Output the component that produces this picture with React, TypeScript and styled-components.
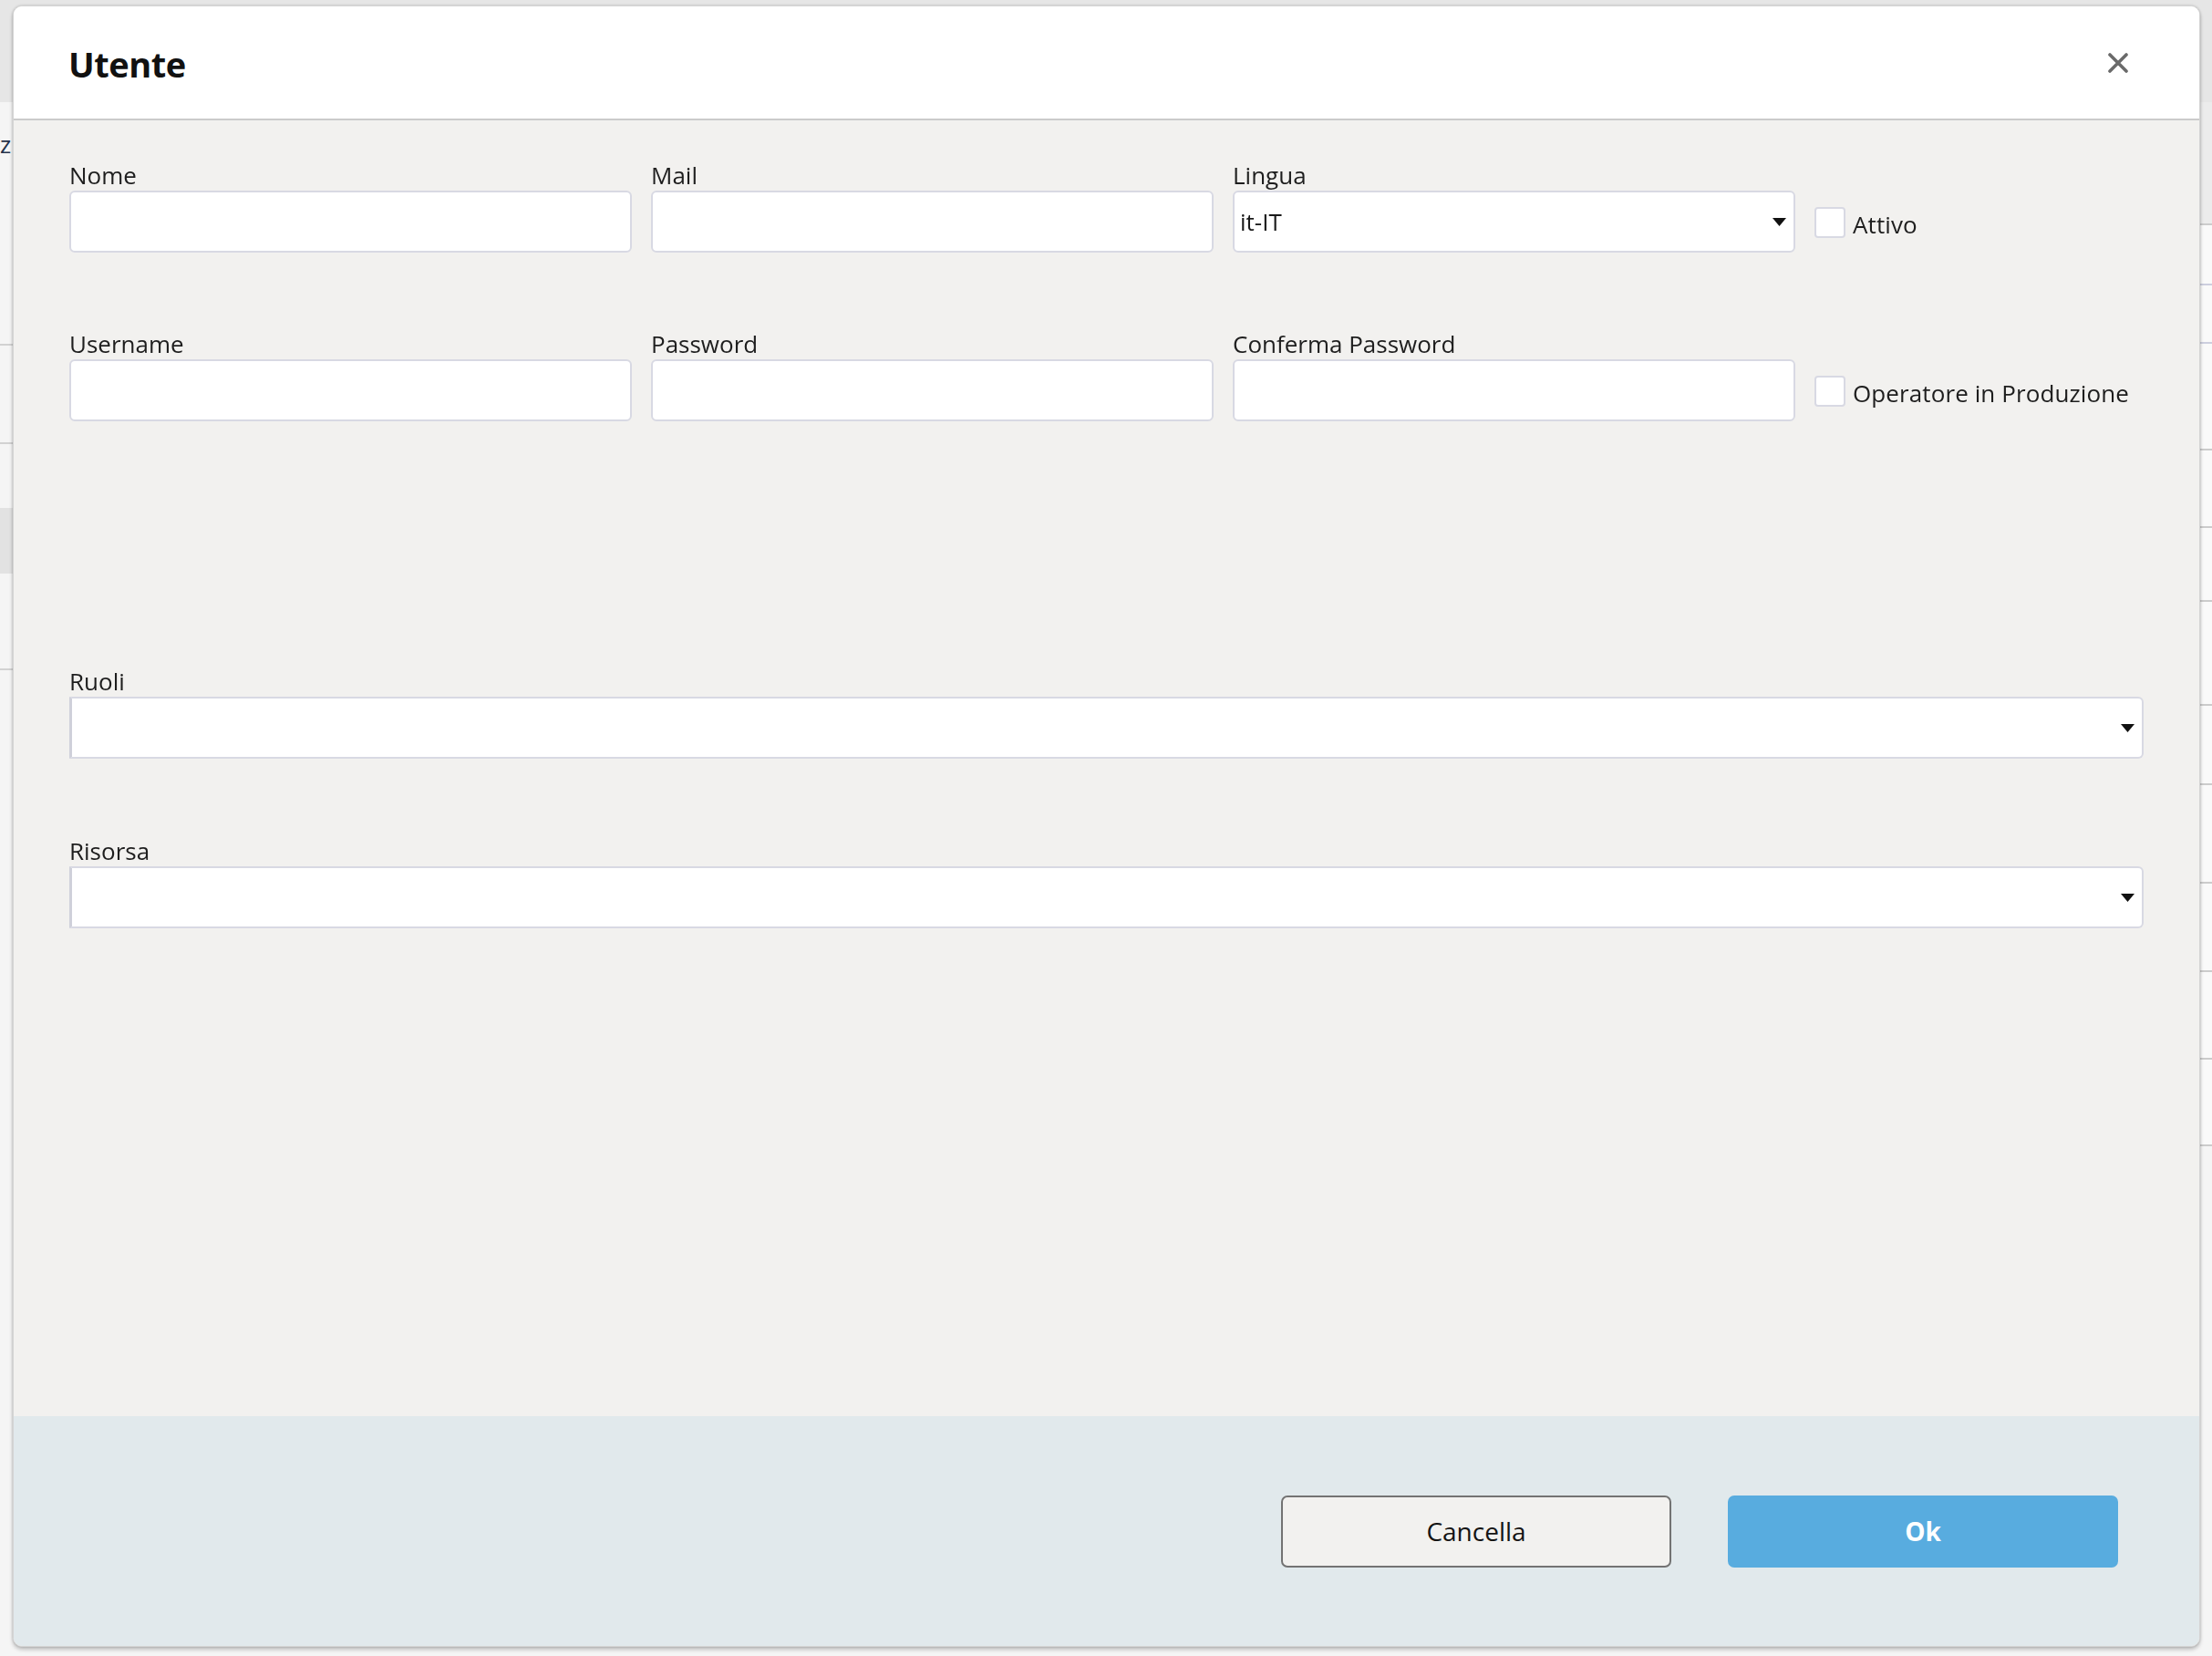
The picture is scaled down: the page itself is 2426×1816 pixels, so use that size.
import React from 'react';
import styled, { createGlobalStyle } from 'styled-components';

const GlobalStyle = createGlobalStyle`
  html, body {
    margin: 0;
    padding: 0;
    width: 100%;
    height: 100%;
    overflow: hidden;
  }
  body {
    font-family: "Open Sans", "Noto Sans", Arial, sans-serif;
    color: #1b1b1b;
    background: #f4f4f4;
  }
  * {
    box-sizing: border-box;
  }
`;

// page behind the modal, only its edges show
const Backdrop = styled.div`
  width: 2426px;
  height: 1816px;
  display: flex;
  flex-direction: column;
  background: #f5f5f5;
`;

const TopBand = styled.div`
  height: 112px;
  flex-shrink: 0;
  background: #e6e6e6;
`;

const BackBody = styled.div`
  flex: 1;
  display: flex;
  justify-content: space-between;
`;

const Rail = styled.div`
  width: 60px;
  display: flex;
  flex-direction: column;
`;

const RailRow = styled.div<{ $h: number; $shade?: boolean; $line?: boolean }>`
  height: ${(p) => p.$h}px;
  flex-shrink: 0;
  background: ${(p) => (p.$shade ? '#e2e2e2' : '#f5f5f5')};
  border-bottom: ${(p) => (p.$line ? '2px solid #d2d2d2' : 'none')};
  font-size: 26px;
  line-height: 1;
  color: #26324a;
  padding: 33px 0 0 0;
  text-align: left;
`;

const Table = styled.div`
  width: 80px;
  display: flex;
  flex-direction: column;
`;

const TableRow = styled.div<{ $h: number; $head?: boolean; $blue?: boolean }>`
  height: ${(p) => p.$h}px;
  flex-shrink: 0;
  background: ${(p) => (p.$head ? '#ececec' : '#fafafa')};
  border-bottom: 2px solid ${(p) => (p.$blue ? '#cdcfdf' : '#cccccc')};
`;

const Overlay = styled.div`
  position: fixed;
  inset: 0;
  padding: 6px 13px 10px 14px;
  display: flex;
`;

const Dialog = styled.div`
  flex: 1;
  display: flex;
  flex-direction: column;
  background: #f2f1ef;
  border: 1px solid #d4d4d4;
  border-radius: 10px;
  box-shadow: 0 3px 4px rgba(0, 0, 0, 0.22), 0 0 3px rgba(0, 0, 0, 0.18);
  overflow: hidden;
`;

const Header = styled.div`
  height: 125px;
  flex-shrink: 0;
  display: flex;
  align-items: center;
  justify-content: space-between;
  padding: 0 77px 0 60px;
  background: #ffffff;
  border-bottom: 2px solid #cbcbcb;
`;

const Title = styled.h1`
  margin: 0;
  padding-top: 2px;
  font-size: 38px;
  font-weight: 700;
  color: #111111;
  letter-spacing: -0.5px;
`;

const CloseButton = styled.button`
  border: none;
  background: none;
  padding: 0;
  width: 24px;
  height: 24px;
  display: flex;
  align-items: center;
  justify-content: center;
  color: #6a6a6a;
  cursor: pointer;
`;

const Body = styled.div`
  flex: 1;
  padding: 43px 61px 0 61px;
  display: flex;
  flex-direction: column;
`;

const Row = styled.div<{ $gap?: number }>`
  display: grid;
  grid-template-columns: 617px 617px 617px 1fr;
  column-gap: 21px;
  margin-top: ${(p) => p.$gap ?? 0}px;
`;

const Section = styled.div<{ $gap: number }>`
  margin-top: ${(p) => p.$gap}px;
  display: flex;
  flex-direction: column;
`;

const Field = styled.div`
  display: flex;
  flex-direction: column;
`;

const Label = styled.label`
  height: 34px;
  font-size: 26px;
  line-height: 34px;
  color: #1e1e1e;
  white-space: nowrap;
`;

const Input = styled.input`
  height: 68px;
  width: 100%;
  border: 2px solid #d8d9e3;
  border-radius: 6px;
  background: #ffffff;
  padding: 0 10px;
  font-family: inherit;
  font-size: 26px;
  outline: none;
`;

const SelectBox = styled.div<{ $wide?: boolean }>`
  height: 68px;
  display: flex;
  align-items: center;
  justify-content: space-between;
  background: #ffffff;
  border: 2px solid #d8d9e3;
  border-left: ${(p) => (p.$wide ? '3px solid #cfd0da' : '2px solid #d8d9e3')};
  border-radius: ${(p) => (p.$wide ? '0 6px 6px 0' : '6px')};
  padding: 0 8px 0 6px;
  font-size: 26px;
  color: #1a1a1a;
`;

const Caret = styled.svg`
  width: 15px;
  height: 9px;
  flex-shrink: 0;
`;

const CheckCell = styled.label`
  align-self: end;
  height: 68px;
  display: flex;
  align-items: center;
  gap: 8px;
  font-size: 26px;
  color: #1e1e1e;
  white-space: nowrap;
`;

const CheckText = styled.span`
  padding-top: 5px;
  letter-spacing: 0.1px;
`;

const Box = styled.span`
  width: 34px;
  height: 34px;
  flex-shrink: 0;
  margin-top: 2px;
  background: #ffffff;
  border: 2px solid #d8d9e3;
  border-radius: 4px;
`;

const Footer = styled.div`
  height: 252px;
  flex-shrink: 0;
  background: #e1e9ec;
  display: flex;
  align-items: center;
  justify-content: flex-end;
  gap: 62px;
  padding-right: 89px;
`;

const Button = styled.button<{ $primary?: boolean }>`
  width: 428px;
  height: 79px;
  border-radius: 7px;
  font-family: inherit;
  font-size: 28px;
  cursor: pointer;
  font-weight: ${(p) => (p.$primary ? 700 : 400)};
  color: ${(p) => (p.$primary ? '#ffffff' : '#141414')};
  background: ${(p) => (p.$primary ? '#58acdf' : '#f2f1ef')};
  border: ${(p) => (p.$primary ? '2px solid #58acdf' : '2px solid #737373')};
`;

const DropCaret = () => (
  <Caret viewBox="0 0 15 9">
    <polygon points="0,0 15,0 7.5,9" fill="#111" />
  </Caret>
);

const App = () => {
  return (
    <>
      <GlobalStyle />
      <Backdrop>
        <TopBand />
        <BackBody>
          <Rail>
            <RailRow $h={178}>z</RailRow>
            <RailRow $h={89} $line />
            <RailRow $h={108} $line />
            <RailRow $h={70} />
            <RailRow $h={72} $shade />
            <RailRow $h={106} $line />
            <RailRow $h={400} />
          </Rail>
          <Table>
            <TableRow $h={135} $head />
            <TableRow $h={66} $blue />
            <TableRow $h={64} $blue />
            <TableRow $h={117} />
            <TableRow $h={85} />
            <TableRow $h={81} />
            <TableRow $h={114} />
            <TableRow $h={87} />
            <TableRow $h={108} />
            <TableRow $h={97} />
            <TableRow $h={96} />
            <TableRow $h={95} />
          </Table>
        </BackBody>
      </Backdrop>

      <Overlay>
        <Dialog>
          <Header>
            <Title>Utente</Title>
            <CloseButton aria-label="Chiudi">
              <svg width="22" height="22" viewBox="0 0 22 22">
                <path d="M2 2 L20 20 M20 2 L2 20" stroke="currentColor" strokeWidth="3.6" strokeLinecap="round" />
              </svg>
            </CloseButton>
          </Header>

          <Body>
            <Row>
              <Field>
                <Label>Nome</Label>
                <Input />
              </Field>
              <Field>
                <Label>Mail</Label>
                <Input />
              </Field>
              <Field>
                <Label>Lingua</Label>
                <SelectBox>
                  <span>it-IT</span>
                  <DropCaret />
                </SelectBox>
              </Field>
              <CheckCell>
                <Box />
                <CheckText>Attivo</CheckText>
              </CheckCell>
            </Row>

            <Row $gap={83}>
              <Field>
                <Label>Username</Label>
                <Input />
              </Field>
              <Field>
                <Label>Password</Label>
                <Input type="password" />
              </Field>
              <Field>
                <Label>Conferma Password</Label>
                <Input type="password" />
              </Field>
              <CheckCell>
                <Box />
                <CheckText>Operatore in Produzione</CheckText>
              </CheckCell>
            </Row>

            <Section $gap={268}>
              <Label>Ruoli</Label>
              <SelectBox $wide>
                <span />
                <DropCaret />
              </SelectBox>
            </Section>

            <Section $gap={84}>
              <Label>Risorsa</Label>
              <SelectBox $wide>
                <span />
                <DropCaret />
              </SelectBox>
            </Section>
          </Body>

          <Footer>
            <Button>Cancella</Button>
            <Button $primary>Ok</Button>
          </Footer>
        </Dialog>
      </Overlay>
    </>
  );
};

export default App;
